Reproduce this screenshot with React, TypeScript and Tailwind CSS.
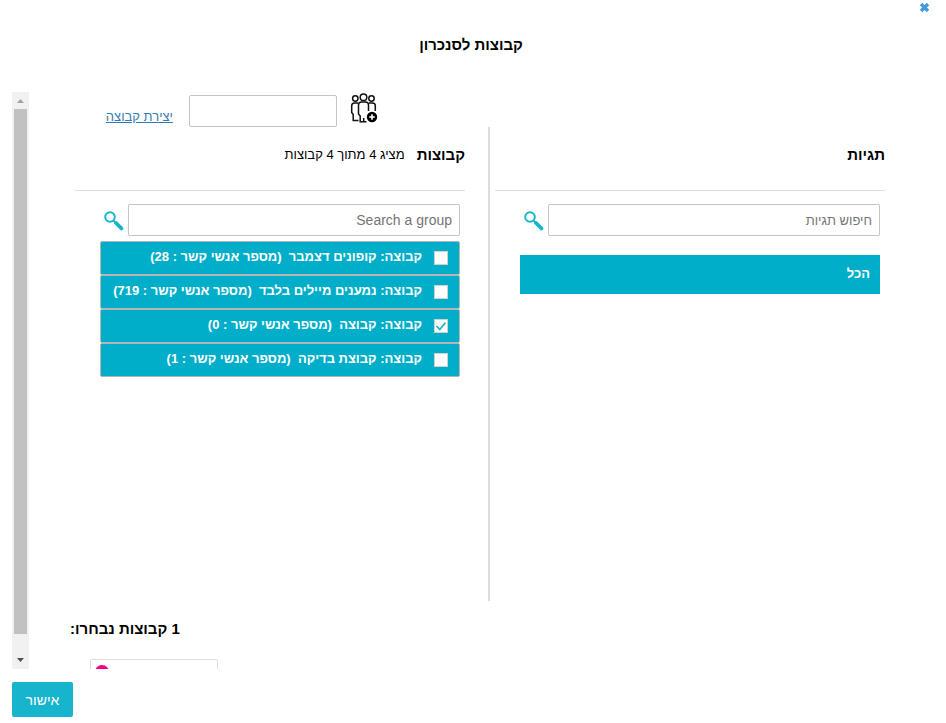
import React, { useState } from "react";

interface Group {
  id: number;
  name: string;
  contacts: number;
}

const groups: Group[] = [
  { id: 1, name: "קופונים דצמבר", contacts: 28 },
  { id: 2, name: "נמענים מיילים בלבד", contacts: 719 },
  { id: 3, name: "קבוצה", contacts: 0 },
  { id: 4, name: "קבוצת בדיקה", contacts: 1 },
];

function SearchIcon() {
  return (
    <svg width="20" height="20" viewBox="0 0 20 20" fill="none" stroke="#17b4cd">
      <circle cx="6" cy="6" r="4.8" strokeWidth="2" />
      <path d="M9.500 9.500l3 3" strokeWidth="2" />
      <path d="M12 12l5.400 5.400" strokeWidth="3.8" strokeLinecap="round" />
    </svg>
  );
}

function AddGroupIcon() {
  return (
    <svg
      width="28"
      height="31"
      viewBox="0 0 28 31"
      fill="none"
      stroke="#111"
      strokeWidth="1.5"
      className="mb-[3px] shrink-0"
    >
      <circle cx="5.3" cy="5.5" r="2.7" />
      <circle cx="13.5" cy="4.2" r="3.3" />
      <circle cx="21.5" cy="5.5" r="2.7" />
      <path d="M8 10H4.500Q1.700 10 1.700 13V19.500L3.200 21.500V27.500H8.500" />
      <path d="M19 10H22.500Q25.300 10 25.300 13V18" />
      <path d="M18.500 18V12Q18.500 9 15.500 9H11.500Q8.500 9 8.500 12V21L10.200 23V28.800H16.500" />
      <path d="M13.700 25V28.500" />
      <circle cx="22" cy="24" r="5.2" fill="#000" stroke="none" />
      <path d="M22 21.200V26.800M19.200 24H24.800" stroke="#fff" strokeWidth="1.6" />
    </svg>
  );
}

function Scrollbar() {
  return (
    <div className="flex w-[17px] shrink-0 flex-col items-center bg-[#f1f1f1]" aria-hidden="true">
      <svg width="17" height="17" viewBox="0 0 17 17" className="shrink-0">
        <path d="M5 11L8.500 7L12 11Z" fill="#a3a3a3" />
      </svg>
      <div className="w-[13px] flex-1 bg-[#c1c1c1]" />
      <svg width="17" height="35" viewBox="0 0 17 35" className="shrink-0">
        <path d="M5 24L8.500 28L12 24Z" fill="#505050" />
      </svg>
    </div>
  );
}

interface SearchBoxProps {
  id: string;
  label: string;
  inputClass: string;
}

function SearchBox({ id, label, inputClass }: SearchBoxProps) {
  return (
    <div className="flex items-center gap-1 pl-1">
      <input
        id={id}
        type="text"
        aria-label={label}
        placeholder={label}
        className={`h-8 min-w-0 flex-1 rounded-xs border border-[#c4c4c4] px-[7px] placeholder:text-[#757575] ${inputClass}`}
      />
      <button type="button" aria-label={label} className="cursor-pointer pt-[2px]">
        <SearchIcon />
      </button>
    </div>
  );
}

export default function App() {
  const [selected, setSelected] = useState<number[]>([3]);

  const toggle = (id: number) => {
    setSelected((prev) =>
      prev.includes(id) ? prev.filter((item) => item !== id) : [...prev, id]
    );
  };

  return (
    <div
      dir="rtl"
      className="bg-white font-['Liberation_Sans',Arial,sans-serif] text-sm text-black"
    >
      <header className="h-[92px]">
        <div className="flex h-[15px] items-center px-4">
          <button type="button" aria-label="סגירה" className="cursor-pointer">
            <svg width="11" height="11" viewBox="0 0 11 11">
              <path d="M2 2L9 9M9 2L2 9" stroke="#4199de" strokeWidth="3.4" />
            </svg>
          </button>
        </div>
        <h1 className="pt-5 pr-1 text-center text-[15px] leading-5 font-bold">
          קבוצות לסנכרון
        </h1>
      </header>

      <main className="flex h-[577px] overflow-hidden pl-3">
        <div className="min-w-0 flex-1 pr-[61px] pl-[46px]">
          <div className="grid grid-cols-2 gap-x-[30px]">
            <div className="col-start-2 flex h-[35px] items-end pr-[87px]">
              <AddGroupIcon />
              <input
                type="text"
                aria-label="שם קבוצה"
                className="mr-[13px] h-8 w-[148px] rounded-xs border border-[#c4c4c4] px-2"
              />
              <a
                href="#create"
                className="mr-4 text-[13px] leading-5 text-[#337ab7] underline"
              >
                יצירת קבוצה
              </a>
            </div>

            <section className="col-start-1 row-start-2 -ml-[7px] h-[474px] border-l-2 border-[#ddd] pl-[5px]">
              <div className="h-16 border-b border-[#ddd] pt-[18px]">
                <h2 className="text-[15px] leading-5 font-bold">תגיות</h2>
              </div>
              <div className="pt-[13px] pr-[5px] pl-[25px]">
                <SearchBox id="tag-search" label="חיפוש תגיות" inputClass="text-[13px]" />
                <button
                  type="button"
                  className="mt-[19px] block h-[39px] w-full cursor-pointer bg-[#00aec9] px-[10px] text-right text-[13px] font-bold text-white"
                >
                  הכל
                </button>
              </div>
            </section>

            <section className="row-start-2">
              <div className="flex h-16 border-b border-[#ddd] pt-[18px]">
                <h2 className="text-[15px] leading-5 font-bold">קבוצות</h2>
                <p className="mr-3 text-[13px] leading-5">מציג 4 מתוך 4 קבוצות</p>
              </div>
              <div className="pt-[13px] pr-[5px] pl-[25px]">
                <SearchBox id="group-search" label="Search a group" inputClass="text-sm" />
                <ul className="mt-[5px]">
                  {groups.map((group) => (
                    <li
                      key={group.id}
                      className="h-[34px] rounded-xs border border-[#b5b5b5] bg-[#00aec9] text-[13px] font-bold text-white"
                    >
                      <label className="flex cursor-pointer items-start pt-[5px] pr-[11px] whitespace-pre">
                        <span className="relative mt-1 size-[14px]">
                          <input
                            type="checkbox"
                            checked={selected.includes(group.id)}
                            onChange={() => toggle(group.id)}
                            className="block size-[14px] appearance-none border border-[#d0d0d0] bg-white"
                          />
                          {selected.includes(group.id) && (
                            <svg
                              viewBox="0 0 14 14"
                              className="pointer-events-none absolute inset-0 size-[14px]"
                            >
                              <path
                                d="M2.500 7L5.800 10.500L11.500 3.500"
                                fill="none"
                                stroke="#17b4cd"
                                strokeWidth="1.7"
                              />
                            </svg>
                          )}
                        </span>
                        <span className="mr-3 leading-5">
                          {`קבוצה: ${group.name}  (מספר אנשי קשר : ${group.contacts})`}
                        </span>
                      </label>
                    </li>
                  ))}
                </ul>
              </div>
            </section>
          </div>

          <section className="flex flex-col items-end pt-[18px]">
            <div className="-ml-[5px] w-[148px]">
              <h3 className="text-left text-[15px] leading-5 font-bold">
                {selected.length} קבוצות נבחרו:
              </h3>
              <div className="mt-5 flex h-8 w-32 justify-end rounded-xs border border-[#ddd] px-1 pt-[5px]">
                <span className="size-[14px] rounded-full bg-[#ec008c]" />
              </div>
            </div>
          </section>
        </div>
        <Scrollbar />
      </main>

      <footer className="flex justify-end px-3 pt-[13px] pb-[6px]">
        <button
          type="button"
          className="h-[35px] w-[61px] cursor-pointer rounded-xs bg-[#17b4cd] text-white"
        >
          אישור
        </button>
      </footer>
    </div>
  );
}
